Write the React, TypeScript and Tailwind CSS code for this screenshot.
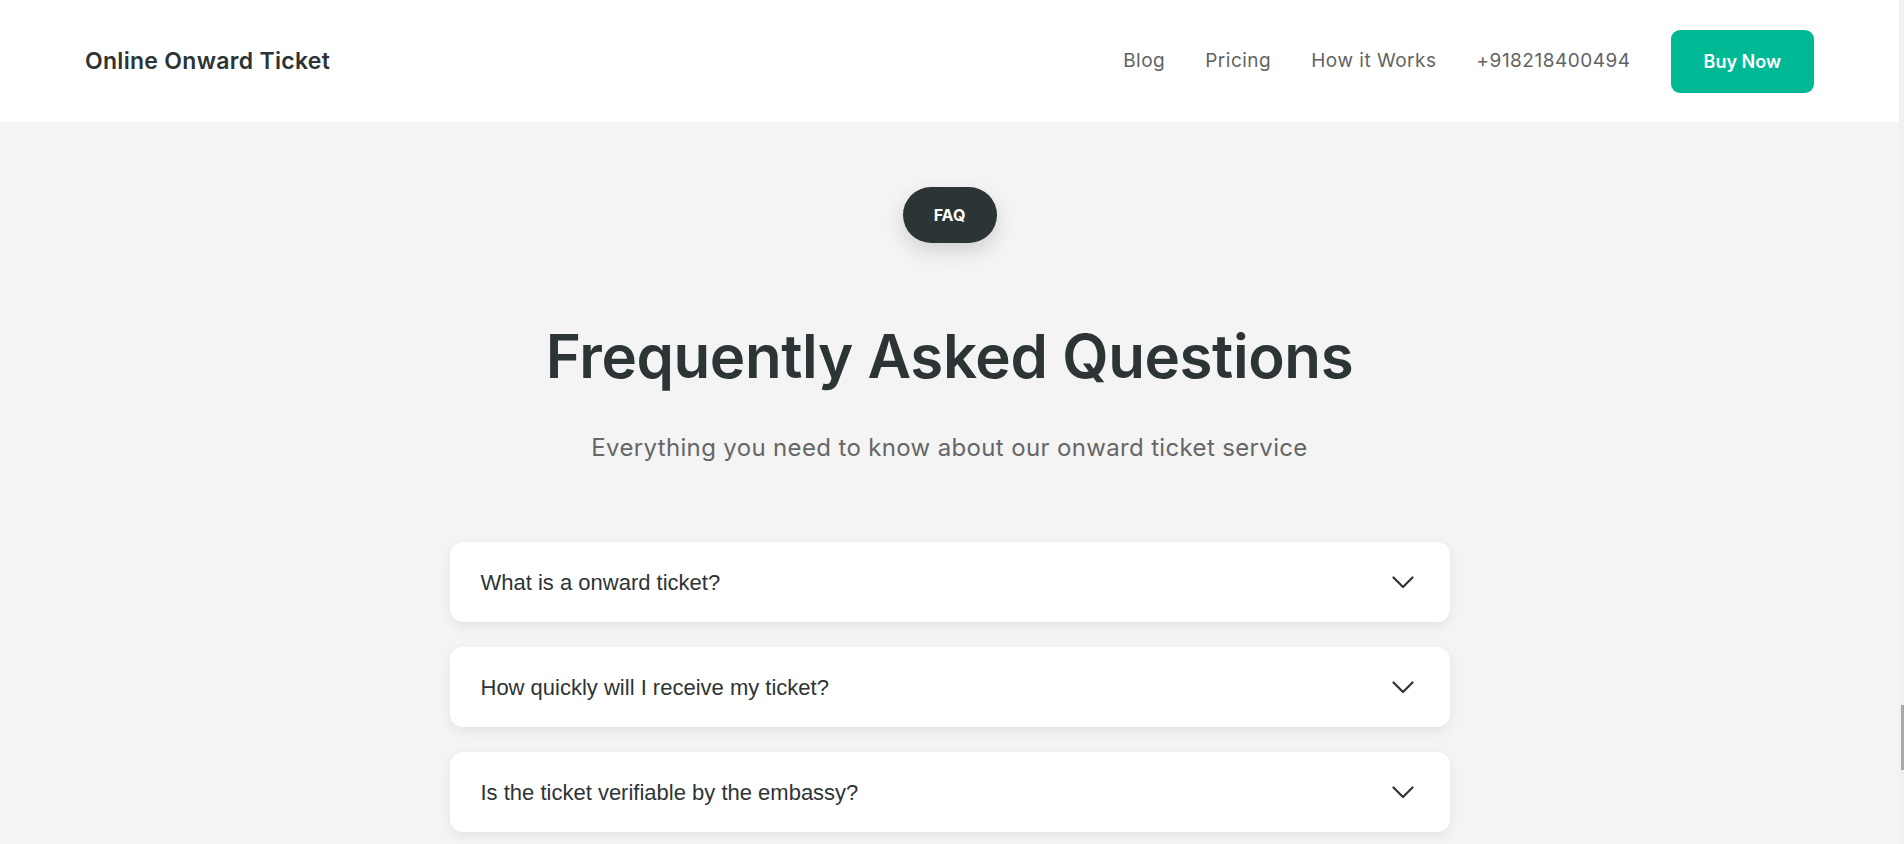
import React from "react";

const faqs = [
  "What is a onward ticket?",
  "How quickly will I receive my ticket?",
  "Is the ticket verifiable by the embassy?",
];

function Chevron() {
  return (
    <svg width="22" height="13" viewBox="0 0 22 13" fill="none" className="shrink-0">
      <path d="M1.5 1.5 L11 11 L20.5 1.5" stroke="#2d3436" strokeWidth="2.2" strokeLinecap="round" strokeLinejoin="round" />
    </svg>
  );
}

export default function App() {
  return (
    <div className="flex h-screen w-full overflow-hidden bg-[#f4f4f4]">
      <div className="flex min-w-0 flex-1 flex-col font-['Inter',sans-serif]">
        <header className="flex h-[122px] shrink-0 items-center justify-between bg-white px-[85px]">
          <div className="text-[23px] font-semibold tracking-[0.3px] text-[#2d3436]">Online Onward Ticket</div>
          <nav className="flex items-center gap-10 text-[19px] tracking-[0.5px] text-[#636363]">
            <span>Blog</span>
            <span>Pricing</span>
            <span>How it Works</span>
            <span>+918218400494</span>
            <button className="h-[63px] rounded-[9px] bg-[#00b894] px-[33px] text-[18px] font-semibold tracking-normal text-white">Buy Now</button>
          </nav>
        </header>
        <main className="flex flex-col items-center">
          <div className="mt-[65px] flex h-[56px] w-[94px] items-center justify-center rounded-full bg-[#2d3436] text-[16px] font-bold text-white shadow-[0_8px_20px_rgba(0,0,0,0.14)]">
            FAQ
          </div>
          <h1 className="mt-[80px] text-[60px] font-semibold leading-[66px] tracking-[-0.4px] text-[#2d3436]">
            Frequently Asked Questions
          </h1>
          <p className="mt-[43px] text-[24px] leading-[32px] tracking-[0.35px] text-[#666666]">
            Everything you need to know about our onward ticket service
          </p>
          <div className="mt-[78px] flex w-[1000px] flex-col gap-[25px]">
            {faqs.map((q) => (
              <div
                key={q}
                className="flex h-[80px] items-center justify-between rounded-[13px] bg-white pl-[31px] pr-[36px] shadow-[0_4px_12px_rgba(0,0,0,0.07)]"
              >
                <span className="font-['Liberation_Sans',Arial,sans-serif] text-[22px] text-[#2d3436]">{q}</span>
                <Chevron />
              </div>
            ))}
          </div>
        </main>
      </div>
      <div className="flex w-[5px] shrink-0 flex-col bg-[#f1f1f1] pt-[705px]">
        <div className="ml-auto h-[65px] w-[3px] bg-[#a8a8a8]" />
      </div>
    </div>
  );
}
